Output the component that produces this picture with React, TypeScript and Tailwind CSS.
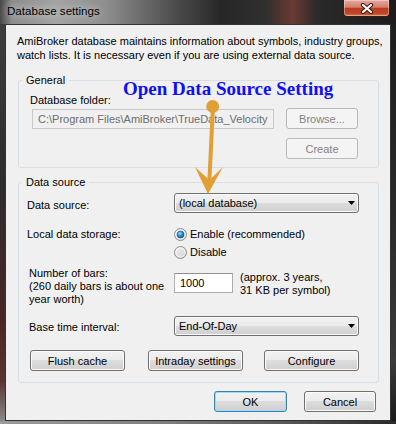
import React from 'react';

type BtnProps = {
  label: string;
  className?: string;
  disabled?: boolean;
  isDefault?: boolean;
};

const WinButton = ({ label, className = '', disabled = false, isDefault = false }: BtnProps) => {
  let look =
    'border-[#707070] bg-[linear-gradient(#f2f2f2,#ebebeb_50%,#dddddd_50%,#cfcfcf)] shadow-[inset_0_0_0_1px_#fbfbfb] text-black';
  if (disabled) look = 'border-[#b5b9bc] bg-[#f4f4f4] text-[#838383]';
  if (isDefault)
    look =
      'border-[#3c7fb1] bg-[linear-gradient(#f2f2f2,#ebebeb_50%,#dddddd_50%,#cfcfcf)] shadow-[inset_0_0_0_1px_#9fdcf7] text-black';
  return (
    <div
      className={`h-[21px] shrink-0 rounded-[3px] border flex items-center justify-center ${look} ${className}`}
    >
      {label}
    </div>
  );
};

const Combo = ({ value }: { value: string }) => (
  <div className="w-[185px] h-[20px] shrink-0 rounded-[3px] border border-[#707070] bg-[linear-gradient(#f2f2f2,#ebebeb_50%,#dddddd_50%,#cfcfcf)] shadow-[inset_0_0_0_1px_#fbfbfb] flex items-center justify-between pl-[4px] pr-[3px]">
    <span>{value}</span>
    <svg width="7" height="4" viewBox="0 0 7 4">
      <path d="M0 0 H7 L3.5 4 Z" fill="#000" />
    </svg>
  </div>
);

const Radio = ({ checked = false }: { checked?: boolean }) => {
  const id = checked ? 'rb-on' : 'rb-off';
  return (
    <svg width="13" height="13" viewBox="0 0 13 13" className="shrink-0">
      <defs>
        <linearGradient id={`${id}-bg`} x1="0" y1="0" x2="1" y2="1">
          <stop offset="0" stopColor="#f4f4f4" />
          <stop offset="1" stopColor="#cfcfcf" />
        </linearGradient>
        <radialGradient id={`${id}-dot`} cx="0.4" cy="0.35" r="0.7">
          <stop offset="0" stopColor="#a8e2ff" />
          <stop offset="0.45" stopColor="#2f95dc" />
          <stop offset="1" stopColor="#0d4d86" />
        </radialGradient>
      </defs>
      <circle cx="6.5" cy="6.5" r="6" fill={`url(#${id}-bg)`} stroke="#8e8f8f" strokeWidth="1" />
      <circle cx="6.5" cy="6.5" r="4.5" fill="none" stroke="#ffffff" strokeOpacity="0.6" strokeWidth="1" />
      {checked && <circle cx="6.5" cy="6.5" r="3.5" fill={`url(#${id}-dot)`} stroke="#1c5a8e" strokeWidth="0.6" />}
    </svg>
  );
};

const GroupBox = ({ title, className = '', children }: { title: string; className?: string; children: React.ReactNode }) => (
  <fieldset className={`ml-[12px] w-[361px] rounded-[3px] border border-[#d5dfe5] ${className}`}>
    <legend className="ml-[3px] px-[4px] leading-[14px]">{title}</legend>
    {children}
  </fieldset>
);

export default function App() {
  return (
    <div className="relative w-[396px] h-[424px] overflow-hidden flex flex-col bg-[#2a2a2a] font-['Segoe_UI','Liberation_Sans',Arial,sans-serif] text-[11px] leading-[14px] text-black">
      {/* title bar */}
      <div className="h-[24px] shrink-0 flex items-start justify-between bg-[linear-gradient(90deg,#474747_0%,#8c8c8c_3%,#a3a3a3_14%,#8d8d8d_27%,#4d4d4d_44%,#272727_56%,#2f2f2f_67%,#6b3a34_74%,#2a2a2a_80%,#1c1c1c_100%)]">
        <span className="mt-[4px] ml-[7px] text-[11.6px] [text-shadow:0_0_8px_rgba(255,255,255,0.9)]">Database settings</span>
        <div className="mr-[6px] w-[47px] h-[17px] rounded-b-[4px] border border-t-0 border-[#3b1a14] bg-[linear-gradient(#e6a99f,#d27e70_45%,#b83c22_52%,#c44a22_85%,#d97a5c)] shadow-[inset_0_0_0_1px_rgba(255,255,255,0.35)] flex items-center justify-center">
          <svg width="14" height="11" viewBox="0 0 14 11">
            <path d="M3 2 L11 9 M11 2 L3 9" stroke="#3a1510" strokeWidth="4.2" strokeLinecap="round" />
            <path d="M3 2 L11 9 M11 2 L3 9" stroke="#ffffff" strokeWidth="2.2" strokeLinecap="round" />
          </svg>
        </div>
      </div>

      <div className="flex h-[397px] shrink-0">
        <div className="w-[5px] bg-[linear-gradient(#3e3e3e,#2c2c2c_40%,#4a2626_75%,#5a3434_90%,#8a8a8a)]" />
        <div className="w-[386px] border border-[#333333] bg-[#f0f0f0] flex flex-col">
          <p className="pt-[9px] pl-[11px] whitespace-nowrap">
            AmiBroker database maintains information about symbols, industry groups,
            <br />
            watch lists. It is necessary even if you are using external data source.
          </p>

          <GroupBox title="General" className="mt-[11px] pb-[8px]">
            <div className="mt-[6px] pl-[11px]">Database folder:</div>
            <div className="mt-[1px] flex items-start">
              <div className="ml-[13px] mt-[1px] w-[242px] h-[20px] border border-[#c7c9cc] bg-[#f0f0f0] text-[#6d6d6d] pl-[5px] flex items-center whitespace-nowrap overflow-hidden">
                {'C:\\Program Files\\AmiBroker\\TrueData_Velocity'}
              </div>
              <WinButton label="Browse..." disabled className="ml-[12px] w-[72px]" />
            </div>
            <WinButton label="Create" disabled className="mt-[9px] ml-[267px] w-[72px]" />
          </GroupBox>

          <GroupBox title="Data source" className="mt-[7px] pb-[11px]">
            <div className="mt-[4px] flex items-start h-[20px]">
              <div className="pl-[8px] w-[155px] mt-[5px]">Data source:</div>
              <Combo value="(local database)" />
            </div>

            <div className="mt-[12px] flex items-start">
              <div className="pl-[8px] w-[155px] mt-[2px]">Local data storage:</div>
              <div className="flex flex-col">
                <div className="h-[18px] flex items-center gap-[3px]">
                  <Radio checked />
                  <span>Enable (recommended)</span>
                </div>
                <div className="h-[18px] flex items-center gap-[3px]">
                  <Radio />
                  <span>Disable</span>
                </div>
              </div>
            </div>

            <div className="mt-[6px] flex items-start">
              <div className="pl-[10px] w-[155px] leading-[13px] whitespace-nowrap">
                Number of bars:
                <br />
                (260 daily bars is about one
                <br />
                year worth)
              </div>
              <div className="mt-[6px] w-[59px] h-[20px] border border-[#abadb3] border-t-[#8e8f8f] bg-white pl-[5px] flex items-center">
                1000
              </div>
              <div className="ml-[7px] mt-[4px] leading-[13px] whitespace-nowrap">
                (approx. 3 years,
                <br />
                31 KB per symbol)
              </div>
            </div>

            <div className="mt-[10px] flex items-start h-[20px]">
              <div className="pl-[10px] w-[155px] mt-[4px]">Base time interval:</div>
              <Combo value="End-Of-Day" />
            </div>

            <div className="mt-[14px] flex">
              <WinButton label="Flush cache" className="ml-[11px] w-[95px]" />
              <WinButton label="Intraday settings" className="ml-[23px] w-[95px]" />
              <WinButton label="Configure" className="ml-[21px] w-[95px]" />
            </div>
          </GroupBox>

          <div className="mt-[8px] pr-[14px] flex justify-end">
            <WinButton label="OK" isDefault className="w-[73px]" />
            <WinButton label="Cancel" className="ml-[17px] w-[72px]" />
          </div>
        </div>
        <div className="w-[5px] bg-[linear-gradient(#1e1e1e,#2a2a2a_50%,#3a3a3a_85%,#1a1a1a)]" />
      </div>
      <div className="h-[3px] shrink-0 bg-[linear-gradient(90deg,#9a9a9a,#808080_40%,#5a5a5a_70%,#2a2a2a)]" />

      {/* annotation overlay */}
      <span className="absolute left-[123px] top-[79px] font-['Liberation_Serif','Times_New_Roman',serif] font-bold text-[19px] leading-[19px] text-[#1010f0] whitespace-nowrap">
        Open Data Source Setting
      </span>
      <svg className="absolute left-0 top-0 pointer-events-none" width="396" height="424" viewBox="0 0 396 424">
        <line x1="213" y1="106" x2="209.3" y2="182" stroke="#e0a035" strokeWidth="4" />
        <circle cx="212.7" cy="106.5" r="6.5" fill="#e0a035" />
        <path d="M195 167 L208 194 L223 167 L209.5 180 Z" fill="#e0a035" />
      </svg>
    </div>
  );
}
